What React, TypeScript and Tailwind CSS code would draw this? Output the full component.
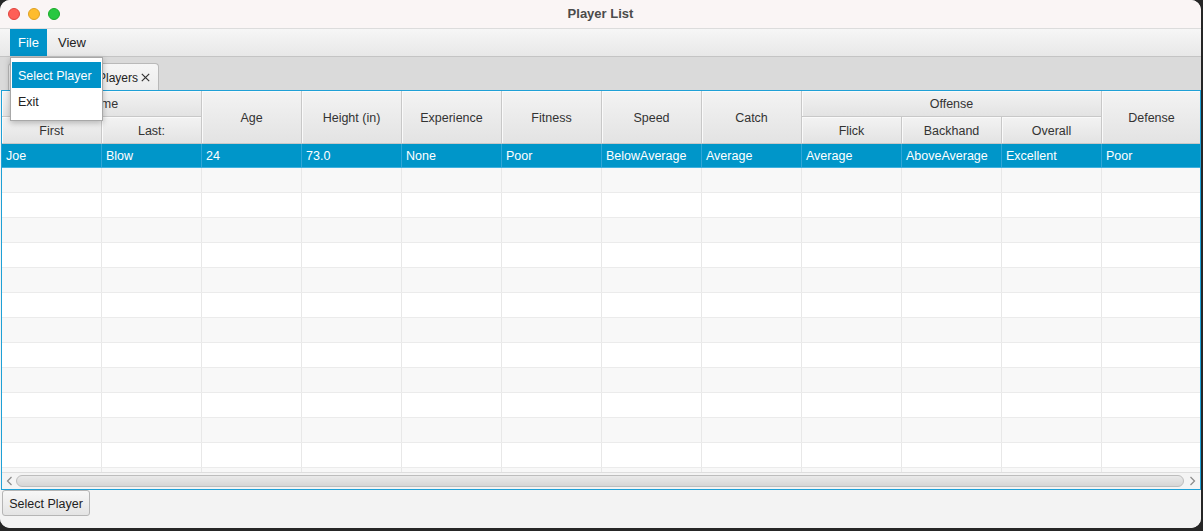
import React from "react";

const F = { fontFamily: '"Liberation Sans", Arial, sans-serif' };

const headTop = "bg-gradient-to-b from-[#f3f3f3] to-[#e3e3e3] border-r border-b border-[#c8c8c8] flex items-center justify-center pt-[2px] text-[#333] text-[12.5px] shadow-[inset_1px_1px_0_#fafafa]";

const row0 = ["Joe", "Blow", "24", "73.0", "None", "Poor", "BelowAverage", "Average", "Average", "AboveAverage", "Excellent", "Poor"];

export default function App() {
  const rows = Array.from({ length: 13 });
  return (
    <div className="w-[1203px] h-[531px] bg-[#262626] overflow-hidden" style={F}>
      <div className="relative w-[1201px] h-[528px] bg-[#f3f3f3] rounded-[10px] overflow-hidden flex flex-col">
        {/* title bar */}
        <div className="h-[28px] bg-[#faf5f5] flex items-center relative shrink-0">
          <div className="flex gap-[8px] pl-[8px]">
            <span className="w-[12px] h-[12px] rounded-full bg-[#fe5f57] border border-[#e0443e]" />
            <span className="w-[12px] h-[12px] rounded-full bg-[#febc2e] border border-[#dea123]" />
            <span className="w-[12px] h-[12px] rounded-full bg-[#28c840] border border-[#1aab29]" />
          </div>
          <div className="absolute inset-0 flex items-center justify-center text-[13px] font-bold text-[#4b4b4b]">Player List</div>
        </div>
        {/* menu bar */}
        <div className="h-[29px] shrink-0 bg-gradient-to-b from-[#f6f6f6] to-[#e8e8e8] border-t border-t-[#dcdcdc] border-b border-b-[#c4c4c4] flex items-stretch pl-[10px] text-[13px] text-[#222]">
          <div className="w-[37px] bg-[#0093c9] text-white flex items-center pl-[8px] pt-[1px]">File</div>
          <div className="flex items-center pl-[11px] pt-[1px]">View</div>
        </div>
        {/* tab header */}
        <div className="h-[33px] shrink-0 bg-[#dadada] flex items-end pl-[8px]">
          <div className="w-[151px] h-[27px] bg-gradient-to-b from-[#f6f6f6] to-[#ececec] border border-b-0 border-[#b9b9b9] rounded-t-[4px] flex items-center justify-end pr-[8px] pt-[2px] gap-[3px] text-[12px] text-[#222]">
            <span>Players</span>
            <svg width="9" height="9" viewBox="0 0 9 9" className="mt-[-1px]">
              <path d="M0.8 0.8 L8.2 8.2 M8.2 0.8 L0.8 8.2" stroke="#333" strokeWidth="1.2" />
            </svg>
          </div>
        </div>
        {/* table */}
        <div className="h-[400px] shrink-0 border border-[#1fa0d6] ml-[1px] overflow-hidden bg-white flex flex-col">
          <div className="grid grid-cols-[repeat(12,100px)] grid-rows-[26px_27px] shrink-0">
            <div className={`${headTop} col-span-2`}>Name</div>
            <div className={`${headTop} row-span-2`}>Age</div>
            <div className={`${headTop} row-span-2`}>Height (in)</div>
            <div className={`${headTop} row-span-2`}>Experience</div>
            <div className={`${headTop} row-span-2`}>Fitness</div>
            <div className={`${headTop} row-span-2`}>Speed</div>
            <div className={`${headTop} row-span-2`}>Catch</div>
            <div className={`${headTop} col-span-3`}>Offense</div>
            <div className={`${headTop} row-span-2`}>Defense</div>
            <div className={headTop}>First</div>
            <div className={headTop}>Last:</div>
            <div className={headTop}>Flick</div>
            <div className={headTop}>Backhand</div>
            <div className={headTop}>Overall</div>
          </div>
          <div className="h-[328px] overflow-hidden shrink-0">
            <div className="grid grid-cols-[repeat(12,100px)] h-[24px] bg-[#0096c9] border-b border-[#3fb0de]">
              {row0.map((t, i) => (
                <div key={i} className="border-r border-[#2fa6d8] text-white text-[12.5px] flex items-center pl-[4px] pt-[2px] whitespace-nowrap">{t}</div>
              ))}
            </div>
            {rows.map((_, r) => (
              <div key={r} className={`grid grid-cols-[repeat(12,100px)] h-[25px] border-b border-[#ebebeb] ${r % 2 === 0 ? "bg-[#f8f8f8]" : "bg-white"}`}>
                {Array.from({ length: 12 }).map((__, i) => (
                  <div key={i} className="border-r border-[#e8e8e8]" />
                ))}
              </div>
            ))}
          </div>
          {/* scrollbar */}
          <div className="h-[17px] shrink-0 bg-[#f4f4f4] border-t border-[#dedede] flex items-center">
            <span className="w-[14px] flex items-center justify-center">
              <svg width="7" height="10" viewBox="0 0 7 10"><path d="M5.5 1 L1.5 5 L5.5 9" stroke="#8a8a8a" strokeWidth="1.2" fill="none" /></svg>
            </span>
            <div className="flex-1 h-[12px] rounded-full bg-gradient-to-b from-[#eaeaea] to-[#d6d6d6] border border-[#bdbdbd]" />
            <span className="w-[16px] flex items-center justify-center">
              <svg width="7" height="10" viewBox="0 0 7 10"><path d="M1.5 1 L5.5 5 L1.5 9" stroke="#8a8a8a" strokeWidth="1.2" fill="none" /></svg>
            </span>
          </div>
        </div>
        {/* bottom */}
        <div className="flex-1 bg-[#f3f3f3] pl-[2px]">
          <button className="w-[88px] h-[26px] pt-[2px] bg-gradient-to-b from-[#f7f7f7] to-[#e4e4e4] border border-[#b5b5b5] rounded-[3px] text-[12.5px] text-[#222]" style={F}>
            Select Player
          </button>
        </div>
        {/* dropdown menu */}
        <div className="absolute left-[10px] top-[57px] w-[93px] h-[64px] bg-white border border-[#a8a8a8] shadow-[0_2px_6px_rgba(0,0,0,0.25)] pt-[4px] px-[1px] text-[12.5px]">
          <div className="h-[26px] bg-[#0093c9] text-white flex items-center pl-[6px] pt-[2px]">Select Player</div>
          <div className="h-[26px] text-[#222] flex items-center pl-[6px] pt-[3px]">Exit</div>
        </div>
      </div>
    </div>
  );
}
